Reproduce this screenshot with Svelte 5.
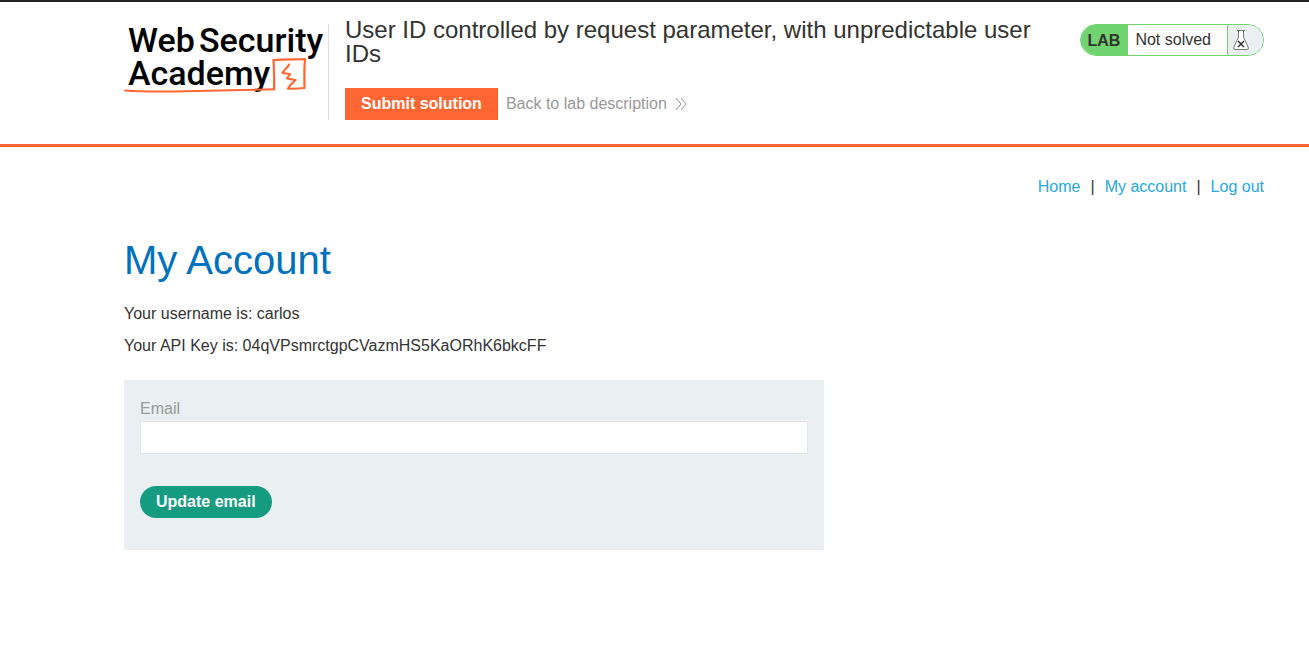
<script>
  let email = $state('');
</script>

<header>
  <div class="wrap head">
    <a class="logo" href="#academy" aria-label="Web Security Academy">
      <svg viewBox="0 0 204 76" width="204" height="76">
        <g class="word">
          <text x="4" y="28">Web</text>
          <text x="75" y="28">Security</text>
          <text x="4" y="61">Academy</text>
        </g>
        <g fill="none" stroke="#ff6633" stroke-linejoin="round" stroke-linecap="round">
          <path stroke-width="2" d="M1 66.500 C20 68 40 67.500 60 67.300 S110 66 150 65.300" />
          <path stroke-width="2.200" d="M150 65.300 C150.500 55 150 45 149.500 36 C160 35 170 35.500 181 35 C180 45 180.500 56 180.500 64 Q172 65 164 64.700 L166.500 61 171.500 56 163 54.500 166 50 158.500 49 C160 45 164 44 165 40.500" />
        </g>
      </svg>
    </a>
    <div class="title">
      <h2>User ID controlled by request parameter, with unpredictable user IDs</h2>
      <div class="actions">
        <button class="submit" type="button">Submit solution</button>
        <a class="back" href="#lab">Back to lab description
          <svg viewBox="0 0 12 12" width="12" height="12" aria-hidden="true">
            <path d="M1 0 L6 6 1 12 M6 0 L11 6 6 12" fill="none" stroke="#999" stroke-width="1" />
          </svg>
        </a>
      </div>
    </div>
    <div class="status">
      <span class="lab">LAB</span>
      <p>Not solved</p>
      <span class="flask">
        <svg viewBox="0 0 16 20" width="16" height="20" aria-hidden="true">
          <path d="M5.500 .500 V7 L.500 18 Q.500 19.500 2 19.500 H14 Q15.500 19.500 15.500 18 L10.500 7 V.500" fill="#fff" stroke="#777" />
          <path d="M4 .500 H12" stroke="#777" />
          <path d="M5 11 L11 17 M11 11 L5 17" stroke="#333" stroke-width="1.500" />
        </svg>
      </span>
    </div>
  </div>
</header>

<main class="wrap">
  <nav>
    <a href="#home">Home</a><span>|</span><a href="#account">My account</a><span>|</span><a href="#logout">Log out</a>
  </nav>
  <h1>My Account</h1>
  <p>Your username is: carlos</p>
  <p>Your API Key is: 04qVPsmrctgpCVazmHS5KaORhK6bkcFF</p>
  <form onsubmit={(e) => e.preventDefault()}>
    <label for="email">Email</label>
    <input id="email" type="email" bind:value={email} />
    <button class="update" type="submit">Update email</button>
  </form>
</main>

<style>
  :global(body) {
    font: 16px/24px "Liberation Sans", Arial, sans-serif;
    color: #333332;
    background: #fff;
  }
  a {
    text-decoration: none;
    color: #29a7df;
  }
  button {
    font: bold 16px/32px "Liberation Sans", Arial, sans-serif;
    color: #fff;
    border: 0;
    padding: 0 16px;
    cursor: pointer;
  }
  .wrap {
    padding: 0 45px 0 124px;
  }
  header {
    border-top: 2px solid #222;
    border-bottom: 3px solid #ff6633;
  }
  .head {
    display: flex;
    align-items: flex-start;
    padding-top: 16px;
    padding-bottom: 24px;
  }
  .logo {
    margin-top: 6px;
    height: 96px;
    border-right: 1px solid #e0e0e0;
  }
  .logo svg {
    display: block;
    overflow: visible;
  }
  .word {
    font-family: Roboto, sans-serif;
    font-size: 34px;
    font-weight: 500;
    fill: #000;
  }
  .title {
    flex: 1;
    padding: 0 32px 0 16px;
  }
  h2 {
    margin: 0 0 22px;
    font-size: 24px;
    line-height: 24px;
    font-weight: normal;
  }
  .actions {
    display: flex;
    align-items: center;
    gap: 8px;
  }
  .submit {
    background: #ff6633;
  }
  .back {
    display: flex;
    align-items: center;
    gap: 8px;
    color: #999;
  }
  .status {
    display: flex;
    box-sizing: border-box;
    height: 32px;
    margin-top: 6px;
    line-height: 30px;
    border: 1px solid #70d470;
    border-radius: 16px;
    overflow: hidden;
  }
  .lab {
    padding: 1px 8px 0 7px;
    font-weight: bold;
    background: #70d470;
  }
  .status p {
    margin: 0;
    padding: 0 16px 0 7px;
    line-height: 30px;
  }
  .flask {
    display: flex;
    align-items: center;
    padding: 0 14px 0 5px;
    background: #eaeff2;
    border-left: 1px solid #70d470;
  }
  nav {
    display: flex;
    justify-content: flex-end;
    gap: 10px;
    padding-top: 28px;
  }
  h1 {
    margin: 37px 0 18px;
    font-size: 40px;
    line-height: 48px;
    font-weight: normal;
    color: #0071bc;
  }
  p {
    margin: 0 0 8px;
  }
  form {
    display: flex;
    flex-direction: column;
    align-items: flex-start;
    box-sizing: border-box;
    max-width: 700px;
    margin-top: 22px;
    padding: 17px 16px 32px;
    background: #eaeff2;
  }
  label {
    color: #999;
  }
  input {
    box-sizing: border-box;
    width: 100%;
    height: 33px;
    margin-bottom: 32px;
    padding: 0 8px;
    font: inherit;
    color: inherit;
    border: 1px solid #e4e4e4;
    background: #fff;
  }
  .update {
    background: #159b80;
    border-radius: 16px;
  }
</style>
